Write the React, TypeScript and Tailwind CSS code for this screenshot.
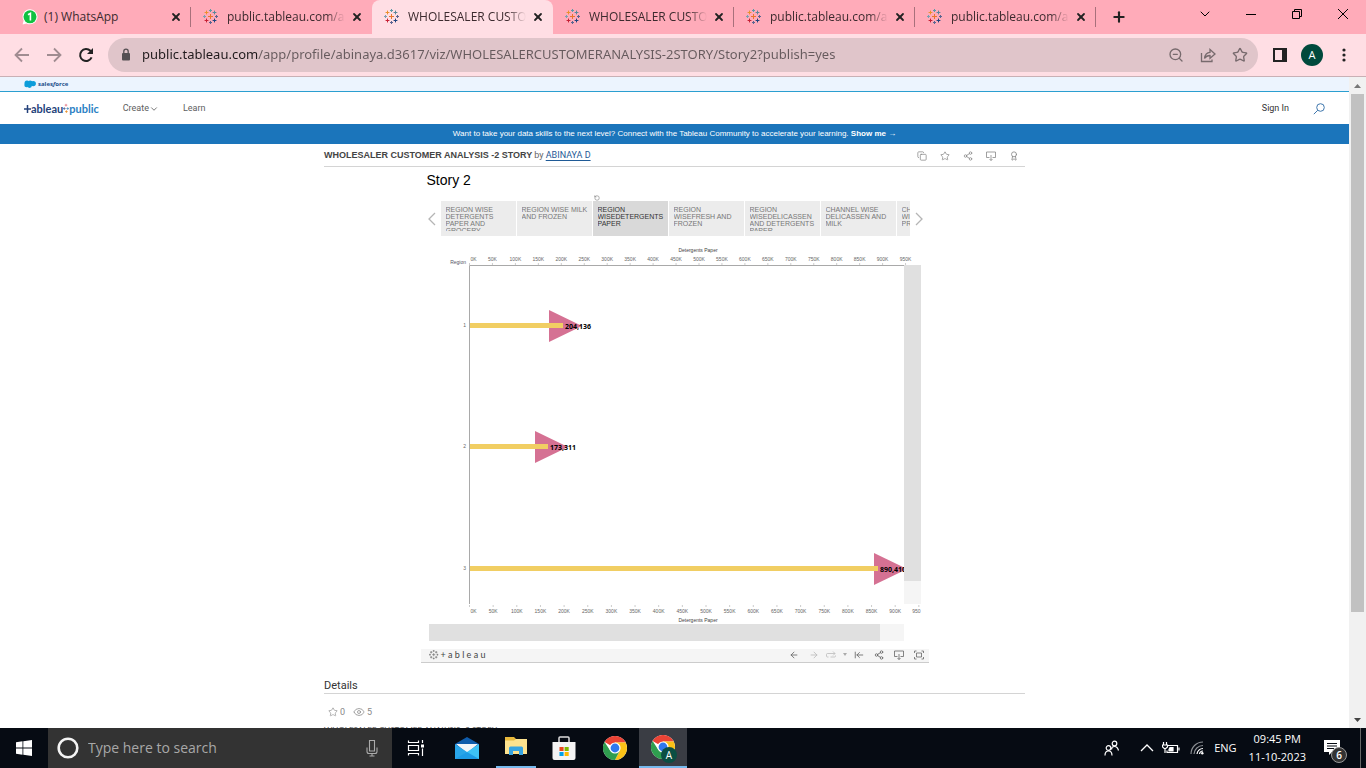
import React from "react";
import {
  ArrowLeft,
  ArrowRight,
  ArrowLeftToLine,
  Award,
  ChevronDown,
  Copy,
  Eye,
  Plus,
  RotateCcw,
  Share2,
  Star,
  X,
  ZoomOut,
} from "lucide-react";

const PLUSES: [number, number, number, string][] = [
  [7.5, 7.5, 2.5, "#e8762c"],
  [7.5, 1.5, 1.5, "#5c9aa8"],
  [7.5, 13.5, 1.5, "#5b6591"],
  [1.5, 7.5, 1.5, "#7b9fb0"],
  [13.5, 7.5, 1.5, "#5b6591"],
  [3.5, 3.5, 1.9, "#eb912c"],
  [11.5, 3.5, 1.9, "#59879b"],
  [3.5, 11.5, 1.9, "#c72035"],
  [11.5, 11.5, 1.9, "#1f447e"],
];

function TableauMark({ className, mono }: { className: string; mono?: boolean }) {
  return (
    <svg viewBox="0 0 16 16" className={className} aria-hidden="true">
      {PLUSES.map(([x, y, r, c], i) => (
        <path
          key={i}
          d={`M${x - r} ${y}H${x + r}M${x} ${y - r}V${y + r}`}
          stroke={mono ? "#666" : c}
          strokeWidth="1"
        />
      ))}
    </svg>
  );
}

function ChromeLogo({ className }: { className: string }) {
  return (
    <svg viewBox="0 0 24 24" className={className} aria-hidden="true">
      <circle cx="12" cy="12" r="12" fill="#fff" />
      <path d="M12 12L1.6 6A12 12 0 0 1 22.4 6L22.4 6.6H12Z" fill="#ea4335" />
      <path d="M12 6.6H22.7A12 12 0 0 1 12 24L16.7 14.7Z" fill="#fbc116" />
      <path d="M1.6 6L7.3 14.7L16.7 14.7L12 24A12 12 0 0 1 1.6 6Z" fill="#2f9e4f" />
      <circle cx="12" cy="12" r="5.6" fill="#fff" />
      <circle cx="12" cy="12" r="4.4" fill="#2f78ee" />
    </svg>
  );
}

const TABS: { title: string; whatsapp?: boolean; active?: boolean; divider?: boolean }[] = [
  { title: "(1) WhatsApp", whatsapp: true, divider: true },
  { title: "public.tableau.com/ap" },
  { title: "WHOLESALER CUSTO", active: true },
  { title: "WHOLESALER CUSTO", divider: true },
  { title: "public.tableau.com/ap", divider: true },
  { title: "public.tableau.com/ap", divider: true },
];

function TabStrip() {
  return (
    <header className="flex h-[34px] shrink-0 bg-[#ffabb9] pl-2.5 text-xs text-[#3c2a2e]">
      {TABS.map((t, i) => (
        <div
          key={i}
          className={
            t.active
              ? "flex w-[181px] items-center rounded-t-lg bg-[#ffdee4] pl-3"
              : "flex w-[181px] items-center pl-3"
          }
        >
          {t.whatsapp ? (
            <svg viewBox="0 0 16 16" className="size-4 shrink-0" aria-hidden="true">
              <path d="M8 .3a7.500 7.500 0 1 1-3.400 14.200L.6 15.600l1-4A7.500 7.500 0 0 1 8 .3Z" fill="#fff" />
              <circle cx="8" cy="7.800" r="6.500" fill="#10c141" />
              <path d="M6 5.800L8.400 4.400V11.400" stroke="#fff" strokeWidth="1.600" fill="none" />
            </svg>
          ) : (
            <TableauMark className="size-4 shrink-0" />
          )}
          <button
            className={
              t.whatsapp
                ? "ml-1.5 flex-1 whitespace-nowrap text-left"
                : "ml-2 min-w-0 flex-1 overflow-hidden whitespace-nowrap text-left [mask-image:linear-gradient(90deg,#000_84%,transparent)]"
            }
          >
            {t.title}
          </button>
          <button aria-label="Close tab" className="ml-1.5">
            <X className="size-3 text-[#222]" strokeWidth={3.6} />
          </button>
          <span className={t.divider ? "ml-2 h-5 w-px bg-[#a8707b]" : "ml-2 h-5 w-px"} />
        </div>
      ))}
      <button aria-label="New tab" className="ml-[15px]">
        <Plus className="size-4 text-[#222]" strokeWidth={3.2} />
      </button>
      <div className="ml-auto flex h-7 items-center text-black">
        <button aria-label="Search tabs" className="grid w-[46px] place-items-center">
          <ChevronDown className="size-4" strokeWidth={1.5} />
        </button>
        <button aria-label="Minimize" className="grid w-[46px] place-items-center">
          <span className="h-px w-2.5 bg-black" />
        </button>
        <button aria-label="Restore" className="grid w-[46px] place-items-center">
          <svg viewBox="0 0 10 10" className="size-2.5" fill="none" stroke="#000">
            <path d="M.5 2.500h7v7h-7zM2.500 2.500v-2h7v7h-2" />
          </svg>
        </button>
        <button aria-label="Close window" className="grid w-[46px] place-items-center">
          <svg viewBox="0 0 10 10" className="size-2.5" fill="none" stroke="#000">
            <path d="M0 0L10 10M10 0L0 10" />
          </svg>
        </button>
      </div>
    </header>
  );
}

function AddressBar() {
  return (
    <div className="flex h-[43px] shrink-0 items-center border-b border-[#c9b0b5] bg-[#ffdee4] pl-3.5">
      <button aria-label="Back">
        <svg viewBox="0 0 16 16" className="size-4" fill="none" stroke="#a08c91" strokeWidth="1.800">
          <path d="M15 8H2M8 1.500L1.500 8L8 14.500" />
        </svg>
      </button>
      <button aria-label="Forward" className="ml-4">
        <svg viewBox="0 0 16 16" className="size-4" fill="none" stroke="#a08c91" strokeWidth="1.800">
          <path d="M1 8H14M8 1.500L14.500 8L8 14.500" />
        </svg>
      </button>
      <button aria-label="Reload" className="ml-4">
        <svg viewBox="0 0 16 16" className="size-4" fill="none" stroke="#222" strokeWidth="2">
          <path d="M13.600 10.400A6 6 0 1 1 12.400 3.800L14 5.400" />
          <path d="M15 1V7H9Z" fill="#222" stroke="none" />
        </svg>
      </button>
      <div className="ml-3.5 flex h-[34px] flex-1 items-center rounded-full bg-[#e0c5ca] pl-3 pr-2.5">
        <svg viewBox="0 0 12 14" className="h-3.5 w-3 shrink-0" aria-hidden="true">
          <rect x="2" y="5" width="8" height="7.500" rx="1" fill="#555053" />
          <path d="M3.800 5V3.400a2.200 2.200 0 0 1 4.400 0V5" fill="none" stroke="#555053" strokeWidth="1.300" />
        </svg>
        <input
          aria-label="Address"
          className="ml-2.5 min-w-0 flex-1 bg-[linear-gradient(90deg,#1f1a1c_116px,#665a5d_116px)] bg-clip-text font-['Noto_Sans',sans-serif] text-[13px] text-transparent outline-none"
          defaultValue="public.tableau.com/app/profile/abinaya.d3617/viz/WHOLESALERCUSTOMERANALYSIS-2STORY/Story2?publish=yes"
        />
        <div className="flex items-center gap-4 text-[#776a6d]">
          <button aria-label="Zoom"><ZoomOut className="size-4" /></button>
          <button aria-label="Share">
            <svg viewBox="0 0 16 16" className="size-4" fill="none" stroke="currentColor" strokeWidth="1.300">
              <path d="M1.500 6V14.500H12V12.500" />
              <path d="M4.500 11.500C5 7.500 7.500 5.500 10 5.400V2.500L15 7L10 11.300V8.500C7.800 8.400 6 9.300 4.500 11.500Z" />
            </svg>
          </button>
          <button aria-label="Bookmark"><Star className="size-4" /></button>
        </div>
      </div>
      <button aria-label="Side panel" className="ml-[15px]">
        <svg viewBox="0 0 14 14" className="size-3.5">
          <path d="M1 1h12v12H1z" fill="none" stroke="#222" strokeWidth="2" />
          <path d="M9 1h4v12H9z" fill="#222" />
        </svg>
      </button>
      <button className="ml-3.5 size-[22px] rounded-full bg-[#00493c] text-[11px] text-white">A</button>
      <button aria-label="Menu" className="ml-[15px] mr-4 w-3">
        <svg viewBox="0 0 12 14" className="h-3.5 w-3" fill="#222">
          <circle cx="6" cy="2" r="1.600" /><circle cx="6" cy="7" r="1.600" /><circle cx="6" cy="12" r="1.600" />
        </svg>
      </button>
    </div>
  );
}

function SiteHeader() {
  return (
    <>
      <div className="flex h-[15px] items-center gap-0.5 border-b border-[#2b9fd0] bg-[#ecf4fe] pl-6">
        <svg viewBox="0 0 12 8" className="h-2 w-3" fill="#0d9dda" aria-hidden="true">
          <circle cx="3" cy="3" r="2.500" /><circle cx="6.200" cy="2.600" r="2.200" /><circle cx="9.200" cy="3.600" r="2.700" />
          <circle cx="2.600" cy="5" r="2.300" /><circle cx="5.500" cy="5.500" r="2.400" />
        </svg>
        <span className="font-['Open_Sans',sans-serif] text-[6px] font-bold text-[#1d4f8c]">
          sales<i>f</i>orce
        </span>
      </div>
      <nav className="flex h-8 items-center pl-6 pr-6 pt-0.5 text-[9px] text-[#5e5e5e]">
        <a href="#home" className="flex items-center font-['Lato',sans-serif] text-[11px] leading-4 text-[#24427b]" aria-label="tableau public">
          <svg viewBox="0 0 7 10" className="h-2.5 w-[7px]"><path d="M0 5H7M3.500 1V9" stroke="#24427b" strokeWidth="1.500" /></svg>
          <span className="font-bold">ableau</span>
          <svg viewBox="0 0 7 12" className="h-3 w-1.5">
            <path d="M0 5.500H3M1.500 4V7" stroke="#5b6591" />
            <path d="M2 1.500H5M3.500 0V3" stroke="#e57a86" />
            <path d="M4 5.500H7M5.500 4V7" stroke="#4f93c0" />
            <path d="M2.500 9H5.500M4 7.500V10.500" stroke="#eb912c" />
          </svg>
          <span className="font-bold text-[#2a7fc4]">public</span>
        </a>
        <button className="ml-6 flex items-center">
          Create <ChevronDown className="size-2.5" />
        </button>
        <a href="#learn" className="ml-6">Learn</a>
        <a href="#signin" className="ml-auto text-[#333]">Sign In</a>
        <button aria-label="Search" className="ml-6">
          <svg viewBox="0 0 12 12" className="size-3" fill="none" stroke="#3f77ad">
            <circle cx="7.500" cy="4.500" r="3.800" /><path d="M4.800 7.200L.8 11.200" />
          </svg>
        </button>
      </nav>
      <div className="h-5 bg-[#1b75bb] text-center font-['Liberation_Sans',Arial,sans-serif] text-[8px] leading-5 text-white">
        Want to take your data skills to the next level? Connect with the Tableau Community to accelerate your learning.{" "}
        <a href="#community" className="font-bold">Show me →</a>
      </div>
    </>
  );
}

const POINTS = [
  "REGION WISE DETERGENTS PAPER AND GROCERY",
  "REGION WISE MILK AND FROZEN",
  "REGION WISEDETERGENTS PAPER",
  "REGION WISEFRESH AND FROZEN",
  "REGION WISEDELICASSEN AND DETERGENTS PAPER",
  "CHANNEL WISE DELICASSEN AND MILK",
  "CHANNEL WISEFRESH PRODUCTS",
];

const TICKS = Array.from({ length: 20 }, (_, i) => i * 50);

function Axis({ step, bottom }: { step: number; bottom?: boolean }) {
  return (
    <svg
      className={bottom ? "h-5 w-full overflow-hidden" : "h-[21px] w-full overflow-hidden"}
      fontFamily="Liberation Sans, Arial, sans-serif"
      fontSize="5"
      fill="#666"
    >
      {TICKS.map((v, i) => {
        const x = 40.5 + step * i;
        const last = bottom && v === 950;
        return (
          <g key={v}>
            <path d={bottom ? `M${x} 1V3` : `M${x} 19V21`} stroke="#ccc" />
            <text
              x={i === 0 ? x + 4 : last ? 491.5 : x}
              y={bottom ? 9 : 17}
              textAnchor={last ? "end" : "middle"}
            >
              {last ? "950" : `${v}K`}
            </text>
          </g>
        );
      })}
      {!bottom && <text x="37" y="20" textAnchor="end" fill="#556">Region</text>}
      <text x="269" y={bottom ? 18 : 8} textAnchor="middle" fill="#444">Detergents Paper</text>
    </svg>
  );
}

const ROWS = [
  { region: "1", y: 61, bar: 134, tip: 120, label: "204,136" },
  { region: "2", y: 182, bar: 119, tip: 106, label: "173,311" },
  { region: "3", y: 304, bar: 449, tip: 445, label: "890,410" },
];

function Chart() {
  return (
    <div className="ml-2 mr-2 mt-2">
      <Axis step={22.95} />
      <div className="flex">
        <svg className="h-[339px] flex-1 overflow-hidden">
          <path d="M40.500 340V.5H475" fill="none" stroke="#a9a9a9" />
          {ROWS.map((r) => (
            <g key={r.region}>
              <path d={`M${r.tip} ${r.y - 16}L${r.tip + 33} ${r.y}L${r.tip} ${r.y + 16}Z`} fill="#d57193" />
              <rect x="41" y={r.y - 3} width={r.bar - 41} height="5" fill="#f1ce63" />
              <text x="37" y={r.y + 1} textAnchor="end" fontSize="5" fontFamily="Liberation Sans, sans-serif" fill="#666">{r.region}</text>
              <text x={r.bar + 2} y={r.y + 3} fontSize="7" fontWeight="bold" fontFamily="Noto Sans, sans-serif">{r.label}</text>
            </g>
          ))}
        </svg>
        <div className="w-[17px] bg-[#f5f5f5]"><div className="h-[316px] bg-[#e0e0e0]" /></div>
      </div>
      <Axis step={23.65} bottom />
      <div className="mr-[17px] h-[17px] bg-[#f5f5f5]"><div className="h-full w-[95%] bg-[#e0e0e0]" /></div>
    </div>
  );
}

function Viz() {
  return (
    <section className="mx-auto w-[508px] max-w-full font-['Liberation_Sans',Arial,sans-serif]">
      <h2 className="pb-px pl-1.5 pt-[3px] text-sm leading-5 text-black">Story 2</h2>
      <div className="flex h-2.5 items-end justify-center pr-[155px]">
        <button aria-label="Revert"><RotateCcw className="size-1.5 text-[#666]" /></button>
      </div>
      <div className="flex items-center pl-1">
        <button aria-label="Previous" className="w-4 pl-[3px]">
          <svg viewBox="0 0 8 14" className="h-3.5 w-2" fill="none" stroke="#b5b5b5" strokeWidth="1.300"><path d="M7 1L1 7L7 13" /></svg>
        </button>
        <div className="flex w-[469px] gap-px overflow-hidden">
          {POINTS.map((p, i) => (
            <button
              key={p}
              className={
                i === 2
                  ? "h-[35px] w-[75px] shrink-0 bg-[#d9d9d9] py-[5px] pl-[5px] text-left text-[7px] leading-[7px] text-[#333]"
                  : "h-[35px] w-[75px] shrink-0 bg-[#ececec] py-[5px] pl-[5px] text-left text-[7px] leading-[7px] text-[#777]"
              }
            >
              <span className="block h-[25px] overflow-hidden">{p}</span>
            </button>
          ))}
        </div>
        <button aria-label="Next" className="w-4 pl-[5px]">
          <svg viewBox="0 0 8 14" className="h-3.5 w-2" fill="none" stroke="#b5b5b5" strokeWidth="1.300"><path d="M1 1L7 7L1 13" /></svg>
        </button>
      </div>
      <Chart />
      <div className="mt-2 flex h-3.5 items-center border-b border-[#ccc] bg-[#f5f5f5] pb-0.5 pl-2 pr-[5px] text-[#666]">
        <TableauMark className="size-2.5" mono />
        <span className="ml-0.5 font-['Lato',sans-serif] text-[9px] leading-none text-[#444]">+ a b l e a u</span>
        <div className="ml-auto flex items-center gap-[7px]">
          <div className="flex gap-2.5">
            <button aria-label="Undo"><ArrowLeft className="size-2.5" /></button>
            <button aria-label="Redo"><ArrowRight className="size-2.5 text-[#bbb]" /></button>
          </div>
          <button aria-label="Replay" className="flex items-center gap-[7px] text-[#bbb]">
            <svg viewBox="0 0 10 8" className="h-2 w-2.5" fill="none" stroke="currentColor" strokeWidth=".8"><path d="M2.500 6H1.500A1 1 0 0 1 .5 5V3.500A1 1 0 0 1 1.500 2.500H9M7 .5L9 2.500L7 4.500M4.500 6H8.500A1 1 0 0 0 9.500 5V4.500" /></svg>
            <svg viewBox="0 0 4 3" className="h-[3px] w-1" fill="#aaa"><path d="M0 0H4L2 3Z" /></svg>
          </button>
          <div className="flex gap-2.5">
            <button aria-label="Revert all"><ArrowLeftToLine className="size-2.5" /></button>
            <button aria-label="Share"><Share2 className="size-2.5" /></button>
            <button aria-label="Download"><DownloadIcon /></button>
            <button aria-label="Full screen">
              <svg viewBox="0 0 10 10" className="size-2.5" fill="none" stroke="currentColor" strokeWidth=".8"><path d="M.5 3V1H2.500M7.500 1H9.500V3M9.500 7V9H7.500M2.500 9H.5V7M2.500 3H7.500V7H2.500Z" /></svg>
            </button>
          </div>
        </div>
      </div>
    </section>
  );
}

function DownloadIcon() {
  return (
    <svg viewBox="0 0 10 10" className="size-2.5" fill="none" stroke="currentColor" strokeWidth=".8" aria-hidden="true">
      <path d="M3.500 6.500H.5V1H9.500V6.500H6.500M5 4V9.500M3.500 8L5 9.500L6.500 8" />
    </svg>
  );
}

function Page() {
  return (
    <main className="flex min-h-0 flex-1 bg-white font-['Roboto',sans-serif]">
      <div className="min-w-0 flex-1 overflow-hidden">
        <SiteHeader />
        <article className="mx-auto w-[701px] max-w-full">
          <div className="flex h-[23px] items-center border-b border-[#d4d4d4] pt-px text-[9px] text-[#666]">
            <h1 className="font-['Liberation_Sans',Arial,sans-serif] font-bold text-[#444]">WHOLESALER CUSTOMER ANALYSIS -2 STORY</h1>
            <span className="ml-0.5">by{" "}
              <a href="#author" className="text-[#1f5a96] underline underline-offset-2">ABINAYA D</a>
            </span>
            <div className="ml-auto flex items-center gap-[13px] pr-1.5 text-[#888]">
              <button aria-label="Copy"><Copy className="size-2.5" strokeWidth={1.8} /></button>
              <button aria-label="Favorite"><Star className="size-2.5" strokeWidth={1.8} /></button>
              <button aria-label="Share"><Share2 className="size-2.5" strokeWidth={1.8} /></button>
              <button aria-label="Download"><DownloadIcon /></button>
              <button aria-label="Nominate"><Award className="size-2.5" /></button>
            </div>
          </div>
          <Viz />
          <h2 className="mt-[15px] border-b border-[#d4d4d4] text-[11px] leading-[15px] text-[#333]">Details</h2>
          <div className="mt-3 flex items-center pl-1 text-[9px] leading-3 text-[#888]">
            <Star className="size-2.5" strokeWidth={1.5} />
            <span className="ml-0.5">0</span>
            <Eye className="ml-2 size-3" strokeWidth={1.5} />
            <span className="ml-0.5">5</span>
          </div>
          <p className="mt-1.5 font-['Lato',sans-serif] text-[8px] leading-3 text-[#555]">WHOLESALER CUSTOMER ANALYSIS -2 STORY</p>
        </article>
      </div>
      <div className="flex w-[17px] shrink-0 flex-col bg-[#f1f1f1]" aria-hidden="true">
        <svg viewBox="0 0 17 17" className="size-[17px]"><path d="M5 11L8.500 7L12 11Z" fill="#777" /></svg>
        <div className="mx-0.5 grow-[518] basis-0 bg-[#c1c1c1]" />
        <div className="grow-[99] basis-0" />
        <svg viewBox="0 0 17 17" className="size-[17px]"><path d="M5 7L8.500 11L12 7Z" fill="#444" /></svg>
      </div>
    </main>
  );
}

function Taskbar() {
  return (
    <footer className="flex h-10 shrink-0 bg-[#060b13] font-['Open_Sans','Noto_Sans',sans-serif] text-white">
      <button aria-label="Start" className="grid w-12 place-items-center">
        <svg viewBox="0 0 16 16" className="size-4" fill="#fff">
          <path d="M0 2.200L6.500 1.300V7.600H0ZM7.300 1.200L16 0V7.600H7.300ZM0 8.400H6.500V14.700L0 13.800ZM7.300 8.400H16V16L7.300 14.800Z" />
        </svg>
      </button>
      <label className="flex w-[344px] items-center bg-[#333] pl-2">
        <svg viewBox="0 0 24 24" className="size-6 shrink-0" fill="none" stroke="#f4f4f4" strokeWidth="2.600"><circle cx="12" cy="12" r="9.300" /></svg>
        <input
          aria-label="Search"
          placeholder="Type here to search"
          className="ml-2 min-w-0 flex-1 bg-transparent text-sm outline-none placeholder:text-[#a8a8a8]"
        />
        <svg viewBox="0 0 12 18" className="mr-3.5 h-[18px] w-3" fill="none" stroke="#aaa" strokeWidth="1.100">
          <path d="M3.500 1.500H8.500V12H3.500ZM1 8.500V12.500Q1 14.500 3 14.500H9Q11 14.500 11 12.500V8.500M6 14.500V17M3.500 17H8.500" />
        </svg>
      </label>
      <button aria-label="Task view" className="grid w-12 place-items-center">
        <svg viewBox="0 0 18 16" className="h-4 w-[18px]" fill="none" stroke="#fff" strokeWidth="1.200">
          <path d="M1.500 .5V2.500H11.500V.5M1.500 5.500H11.500V10.500H1.500ZM1.500 15.500V13.500H11.500V15.500M15.500 0V3M15.500 8.500V16" />
          <path d="M14 4.500H17V7.500H14Z" fill="#fff" stroke="none" />
        </svg>
      </button>
      <button aria-label="Mail" className="grid w-[54px] place-items-center">
        <svg viewBox="0 0 24 22" className="h-[22px] w-6">
          <path d="M0 7L12 0L24 7V22H0Z" fill="#0f5cab" />
          <path d="M1 7H23L12 16Z" fill="#f2f5f8" />
          <path d="M0 7L12 15L24 22H0Z" fill="#29a5e8" />
          <path d="M24 7L12 15L3 22H24Z" fill="#3dc2f5" />
          <path d="M0 22L12 15L24 22Z" fill="#1d9be6" />
        </svg>
      </button>
      <button aria-label="File Explorer" className="ml-0.5 grid w-10 place-items-center border-b-2 border-[#76b9ed] pb-0.5">
        <svg viewBox="0 0 22 18" className="h-[18px] w-[22px]">
          <path d="M0 0H9L11 2H22V17H0Z" fill="#e8b93c" />
          <path d="M0 3.500H9L11 2H22V17H0Z" fill="#fde38f" />
          <path d="M4 18V11Q4 9.500 5.500 9.500H16.500Q18 9.500 18 11V18H14V14H8V18Z" fill="#37a5e2" />
        </svg>
      </button>
      <button aria-label="Store" className="ml-0.5 grid w-[52px] place-items-center">
        <svg viewBox="0 0 24 24" className="size-6">
          <path d="M7 6V2Q7 1 8 1H16Q17 1 17 2V6" fill="none" stroke="#ddd" strokeWidth="1.500" />
          <path d="M.5 6H23.500V22Q23.500 24 21.500 24H2.500Q.5 24 .5 22Z" fill="#f4f4f4" />
          <path d="M7.500 11H11.600V15H7.500Z" fill="#e8471c" /><path d="M12.600 11H16.700V15H12.600Z" fill="#7eb900" />
          <path d="M7.500 16H11.600V20H7.500Z" fill="#00a1e8" /><path d="M12.600 16H16.700V20H12.600Z" fill="#fdb800" />
        </svg>
      </button>
      <button aria-label="Chrome" className="grid w-[49px] place-items-center"><ChromeLogo className="size-6" /></button>
      <button aria-label="Chrome, profile A" className="relative grid w-12 place-items-center border-b-2 border-[#76b9ed] bg-[#3a3d44]">
        <ChromeLogo className="size-6" />
        <span className="absolute left-[22px] top-[19px] size-4 rounded-full bg-[#0b4f43] text-center text-[10px] leading-4">A</span>
      </button>
      <div className="ml-auto flex items-center">
        <button aria-label="People">
          <svg viewBox="0 0 16 16" className="size-4" fill="none" stroke="#fff" strokeWidth="1.200">
            <circle cx="4.500" cy="8" r="2.300" /><path d="M1 15.500Q1 11 4.500 11T8 15.500" />
            <circle cx="10.500" cy="3.500" r="2.300" /><path d="M7.500 9.500Q7.500 6.500 10.500 6.500T14.500 10.500" />
          </svg>
        </button>
        <button aria-label="Hidden icons" className="ml-5">
          <svg viewBox="0 0 14 8" className="h-2 w-3.5" fill="none" stroke="#fff" strokeWidth="1.300"><path d="M1 7L7 1L13 7" /></svg>
        </button>
        <button aria-label="Battery" className="ml-2">
          <svg viewBox="0 0 18 12" className="h-3 w-[18px]" fill="none" stroke="#fff" strokeWidth="1.200">
            <path d="M6 3.500H15.500V10.500H5V8.500M17 5.500V8.500" /><path d="M8 5.500H11V9H7V7.500Z" fill="#fff" />
            <path d="M1.500 0V3M4.500 0V3M.5 3H5.500V5L3.800 6.500H2.200L.5 5ZM3 6.500V11" />
          </svg>
        </button>
        <button aria-label="Network" className="ml-2.5">
          <svg viewBox="0 0 14 14" className="size-3.5" fill="none" strokeWidth="1.200">
            <path d="M1 13A12 12 0 0 1 13 1M4 13A9 9 0 0 1 13 4.500" stroke="#8c8f94" />
            <path d="M7 13A6 6 0 0 1 13 7.500M9.500 13A3.500 3.500 0 0 1 13 10" stroke="#fff" /><circle cx="12.300" cy="12.300" r="1.200" fill="#fff" />
          </svg>
        </button>
        <span className="ml-2.5 text-[11px]">ENG</span>
        <div className="ml-3 text-center text-[11px] leading-[18px]">
          <div>09:45 PM</div>
          <div>11-10-2023</div>
        </div>
        <button aria-label="6 notifications" className="relative ml-[18px]">
          <svg viewBox="0 0 16 16" className="size-4"><path d="M0 0H16V12H8L5 15V12H0Z" fill="#fff" /><path d="M3 3.500H13M3 6H13M3 8.500H10" stroke="#060b13" /></svg>
          <span className="absolute left-[7px] top-[7px] size-4 rounded-full border border-[#999] bg-[#333] text-center text-[10px] font-semibold leading-[14px]">6</span>
        </button>
        <button aria-label="Show desktop" className="ml-5 h-full w-1.5 border-l border-[#666]" />
      </div>
    </footer>
  );
}

export default function App() {
  return (
    <div className="flex h-screen flex-col overflow-hidden font-['Open_Sans','Noto_Sans',sans-serif]">
      <TabStrip />
      <AddressBar />
      <Page />
      <Taskbar />
    </div>
  );
}
